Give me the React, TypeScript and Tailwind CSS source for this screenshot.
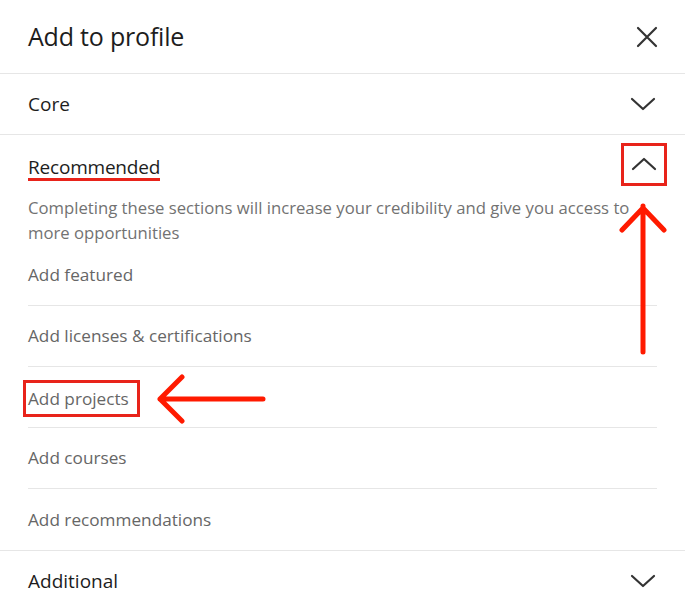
import React from 'react';

const ChevronDown = () => (
  <svg width="28" height="16" viewBox="0 0 28 16" fill="none" stroke="#333" strokeWidth="2.2" strokeLinecap="round" strokeLinejoin="round">
    <path d="M3 3l11 10 11-10" />
  </svg>
);

const ChevronUp = () => (
  <svg width="28" height="16" viewBox="0 0 28 16" fill="none" stroke="#333" strokeWidth="2.2" strokeLinecap="round" strokeLinejoin="round">
    <path d="M3 13l11-10 11 10" />
  </svg>
);

const CloseIcon = () => (
  <svg width="22" height="22" viewBox="0 0 22 22" fill="none" stroke="#333" strokeWidth="2.2" strokeLinecap="round">
    <path d="M2 2l18 18M20 2L2 20" />
  </svg>
);

const items = [
  'Add featured',
  'Add licenses & certifications',
  'Add projects',
  'Add courses',
  'Add recommendations',
];

export default function App() {
  return (
    <div
      className="relative w-[685px] h-[606px] overflow-hidden bg-white text-[#1d1d1d]"
      style={{ fontFamily: '"Open Sans", "Noto Sans", Arial, sans-serif' }}
    >
      {/* header */}
      <div className="flex h-[74px] items-center justify-between border-b border-[#e6e6e6] pl-7 pr-[27px]">
        <h1 className="text-[25px] font-normal tracking-[-0.2px]">Add to profile</h1>
        <CloseIcon />
      </div>

      {/* core */}
      <div className="flex h-[61px] items-center justify-between border-b border-[#e6e6e6] pl-7 pr-7">
        <span className="text-[19px]">Core</span>
        <ChevronDown />
      </div>

      {/* recommended */}
      <div className="pl-7 pr-7">
        <div className="flex h-[62px] items-center justify-between pt-1">
          <span className="text-[19px] border-b-[3px] border-[#e8231a] leading-[22px] tracking-[-0.2px]">Recommended</span>
          <div className="-mr-[10px] -mt-[8px] flex h-[43px] w-[46px] items-center justify-center border-[3px] border-[#e8231a]">
            <ChevronUp />
          </div>
        </div>
        <p className="-mt-[2px] text-[16.7px] leading-[25px] text-[#727272] pr-6">
          Completing these sections will increase your credibility and give you access to more opportunities
        </p>
        <ul>
          {items.map((label, i) => (
            <li
              key={label}
              className={`flex h-[61px] items-center text-[17.2px] text-[#666] ${i < items.length - 1 ? 'border-b border-[#e6e6e6]' : ''}`}
            >
              {label === 'Add projects' ? (
                <span className="-ml-[5px] mt-[3px] border-[3px] border-[#e8231a] pl-[2px] pr-[8px] py-[3px]">{label}</span>
              ) : (
                <span>{label}</span>
              )}
            </li>
          ))}
        </ul>
      </div>

      {/* additional */}
      <div className="flex h-[61px] items-center justify-between border-t border-[#e6e6e6] pl-7 pr-7">
        <span className="text-[19px]">Additional</span>
        <ChevronDown />
      </div>

      {/* annotation arrows */}
      <svg className="absolute left-[614px] top-[200px]" width="56" height="156" viewBox="0 0 56 156" fill="none" stroke="#ff1a00" strokeWidth="5" strokeLinecap="round" strokeLinejoin="round">
        <path d="M29 6v146M8 30L29 8l21 22" />
      </svg>
      <svg className="absolute left-[150px] top-[372px]" width="118" height="54" viewBox="0 0 118 54" fill="none" stroke="#ff1a00" strokeWidth="5" strokeLinecap="round" strokeLinejoin="round">
        <path d="M10 27h103M32 5L10 27l22 22" />
      </svg>
    </div>
  );
}
